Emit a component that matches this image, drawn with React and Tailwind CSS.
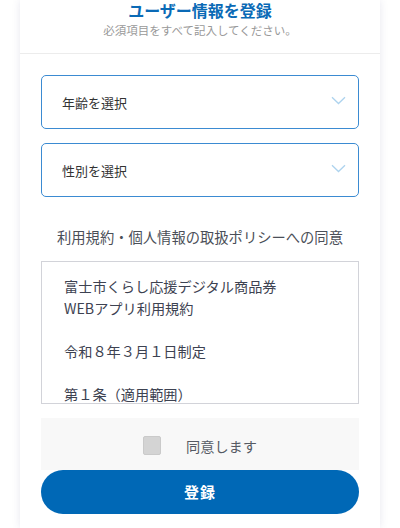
import React, { useState } from "react";

const font = { fontFamily: '"Noto Sans CJK JP", "Noto Sans", sans-serif' };

const Chevron = () => (
  <svg width="15" height="9" viewBox="0 0 15 9" fill="none" className="absolute right-[12px] top-[20px]">
    <path d="M1 1.2 L7.5 7.5 L14 1.2" stroke="#add3ee" strokeWidth="1.3" />
  </svg>
);

const SelectBox = ({ label }) => (
  <div className="relative h-[54px] rounded-[5px] border border-[#3b8bd2] bg-white flex items-center pl-[20px]">
    <span className="text-[13px] text-[#333] pt-[2px]">{label}</span>
    <Chevron />
  </div>
);

const App = () => {
  const [agree, setAgree] = useState(false);

  return (
    <div className="min-h-screen bg-white px-5" style={font}>
      <div className="bg-white min-h-[528px] shadow-[0_0_8px_rgba(70,70,130,0.13)]">
        {/* header */}
        <div className="border-b border-[#ececec] pb-[14px] text-center">
          <h1 className="text-[16px] leading-[20px] font-bold text-[#0a6ab6]">ユーザー情報を登録</h1>
          <p className="mt-[1px] text-[11.5px] leading-[18px] text-[#999]">必須項目をすべて記入してください。</p>
        </div>

        <div className="px-[21px] pt-[21px]">
          <SelectBox label="年齢を選択" />
          <div className="mt-[14px]">
            <SelectBox label="性別を選択" />
          </div>

          <h2 className="mt-[29px] text-center text-[14.3px] leading-[22px] text-[#4b4f58]">
            利用規約・個人情報の取扱ポリシーへの同意
          </h2>

          {/* terms */}
          <div className="mt-[13px] h-[143px] overflow-y-auto border border-[#d2d3d9] px-[22px] pt-[14px] text-[14.2px] leading-[21.6px] text-[#3d4251] [scrollbar-width:none]">
            <p>富士市くらし応援デジタル商品券</p>
            <p>WEBアプリ利用規約</p>
            <p>&nbsp;</p>
            <p>令和８年３月１日制定</p>
            <p>&nbsp;</p>
            <p>第１条（適用範囲）</p>
            <p>本規約は、富士市くらし応援デジタル商品券WEBアプリの利用に関し、必要な事項を定めるものです。</p>
          </div>

          {/* agree */}
          <div
            onClick={() => setAgree(!agree)}
            className="mt-[14px] h-[52px] bg-[#f8f8f8] flex items-center justify-center gap-[25px] cursor-pointer"
          >
            <span className="mt-[2px] w-[18px] h-[19px] rounded-[2px] bg-[#d4d4d4] border border-[#cacaca]" />
            <span className="pt-[3px] text-[14.2px] leading-[20px] text-[#555a63]">同意します</span>
          </div>

          <button className="w-full h-[44px] rounded-full bg-[#0068b6] text-white text-[15px] font-bold tracking-[1px]">
            登録
          </button>
        </div>
      </div>
    </div>
  );
};

export default App;
